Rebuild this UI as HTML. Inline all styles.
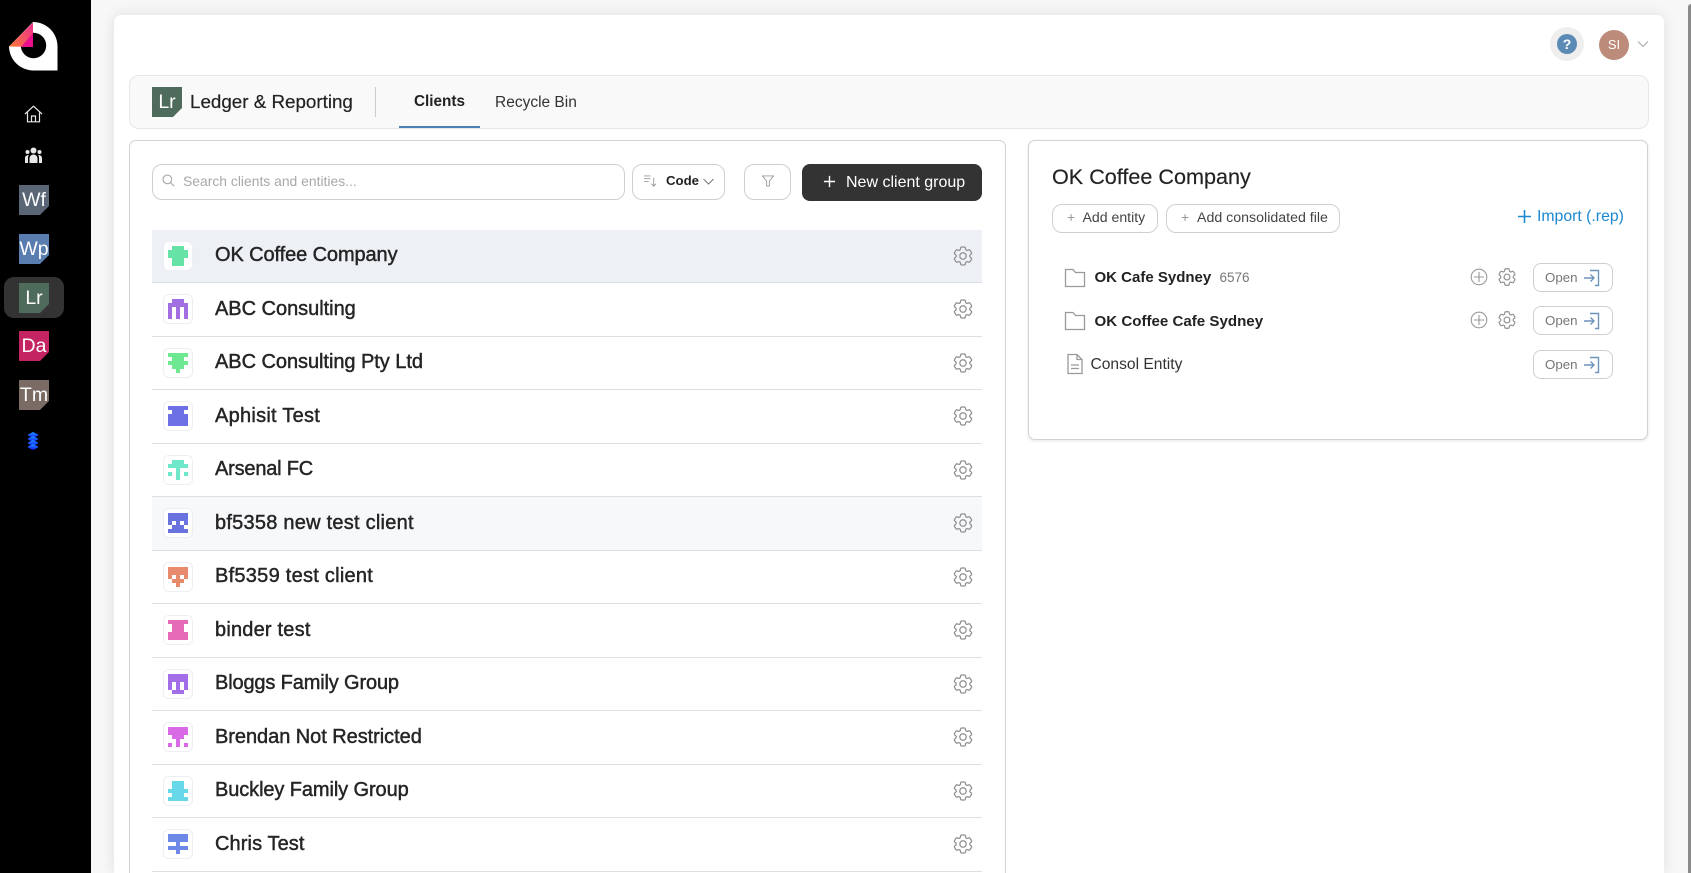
<!DOCTYPE html>
<html lang="en"><head><meta charset="utf-8"><title>Ledger &amp; Reporting</title>
<style>
*{box-sizing:border-box}
html,body{margin:0;width:1691px;height:873px;overflow:hidden;background:#f7f7f7;font-family:"Liberation Sans",Arial,sans-serif;color:#222}
#root{position:relative;width:1691px;height:873px;overflow:hidden;background:#f7f7f7}
.a{position:absolute}
.t{position:absolute;white-space:nowrap;line-height:20px}
#side{position:absolute;left:0;top:0;width:91px;height:873px;background:#000}
.tile{position:absolute;width:30px;height:30px;color:#fff;display:flex;align-items:center;justify-content:center;font-size:19.500px;clip-path:polygon(0 0,100% 0,100% 70%,70% 100%,0 100%)}
#card{position:absolute;left:114px;top:15px;width:1550px;height:858px;background:#fff;border-radius:7px 7px 0 0;box-shadow:0 0 14px rgba(0,0,0,.1)}
.btn{position:absolute;background:#fff;border:1px solid #cfcfcf;border-radius:10px}
.row{position:absolute;left:152px;width:830px;border-bottom:1px solid #dcdfe3}
.row .ic{position:absolute;left:11px;top:11px;width:30px;height:30px;background:#fff;border:1px solid #eceef1;border-radius:6px}
.row .ic svg{position:absolute;left:4px;top:4px;width:20px;height:20px;shape-rendering:crispEdges}
.row .n{position:absolute;left:63px;top:14px;line-height:24px;font-size:20px;letter-spacing:-.1px;white-space:nowrap;color:#252525;-webkit-text-stroke:.45px #252525}
.row .g{position:absolute;left:799px;top:14px;width:24px;height:24px}
.gear{fill:none;stroke:#8f8f8f;stroke-width:1.25}
.open{position:absolute;left:1533px;width:80px;height:29px;background:#fff;border:1px solid #cfcfcf;border-radius:8px}
.open span{position:absolute;left:11px;top:4px;line-height:20px;font-size:13.300px;color:#777}
.open svg{position:absolute;left:49px;top:5px;width:18px;height:18px;fill:none;stroke:#6f94bb;stroke-width:1.4}
</style></head><body>
<div id="root">
<svg width="0" height="0" style="position:absolute"><defs>
<symbol id="gear" viewBox="0 0 24 24"><path d="M9.594 3.94c.09-.542.56-.94 1.11-.94h2.593c.55 0 1.02.398 1.11.94l.213 1.281c.063.374.313.686.645.87.074.04.147.083.22.127.325.196.72.257 1.075.124l1.217-.456a1.125 1.125 0 0 1 1.37.49l1.296 2.247a1.125 1.125 0 0 1-.26 1.431l-1.003.827c-.293.241-.438.613-.43.992a7.723 7.723 0 0 1 0 .255c-.008.378.137.75.43.991l1.004.827c.424.35.534.955.26 1.43l-1.298 2.247a1.125 1.125 0 0 1-1.369.491l-1.217-.456c-.355-.133-.75-.072-1.076.124a6.47 6.47 0 0 1-.22.128c-.331.183-.581.495-.644.869l-.213 1.281c-.09.543-.56.94-1.11.94h-2.594c-.55 0-1.019-.398-1.11-.94l-.213-1.281c-.062-.374-.312-.686-.644-.87a6.52 6.52 0 0 1-.22-.127c-.325-.196-.72-.257-1.076-.124l-1.217.456a1.125 1.125 0 0 1-1.369-.49l-1.297-2.247a1.125 1.125 0 0 1 .26-1.431l1.004-.827c.292-.24.437-.613.43-.991a6.932 6.932 0 0 1 0-.255c.007-.38-.138-.751-.43-.992l-1.004-.827a1.125 1.125 0 0 1-.26-1.43l1.297-2.247a1.125 1.125 0 0 1 1.37-.491l1.216.456c.356.133.751.072 1.076-.124.072-.044.146-.086.22-.128.332-.183.582-.495.644-.869l.214-1.28Z"/><circle cx="12" cy="12" r="3.2"/></symbol>
<symbol id="enter" viewBox="0 0 18 18"><path d="M1 9h10M7.500 5.500 11 9l-3.500 3.500M7 1.500h8.500v15H12"/></symbol>
<linearGradient id="lg" x1="0" y1="1" x2="1" y2="0"><stop offset="0" stop-color="#f97b35"/><stop offset="1" stop-color="#ee2a8e"/></linearGradient>
<linearGradient id="st" x1="0" y1="0" x2="0" y2="1"><stop offset="0" stop-color="#1a9cff"/><stop offset="1" stop-color="#1a10ff"/></linearGradient>
</defs></svg>

<div id="side">
<svg class="a" style="left:0;top:0" width="91" height="91" viewBox="0 0 91 91">
<path d="M33 22A24.500 24.500 0 0 1 57.500 46.500V70.500H33.500A24.500 24.500 0 0 1 9 46.500Z" fill="#fff"/>
<circle cx="33.500" cy="45.500" r="12.700" fill="#000"/>
<path d="M9 46.500 33 22.500V47Z" fill="url(#lg)"/>
<path d="M21 47 33 33V47Z" fill="#ea0f8c"/>
</svg>
<svg class="a" style="left:24px;top:105px" width="19" height="18" viewBox="0 0 19 18" fill="none" stroke="#e8e8e8" stroke-width="1.2"><path d="M1 9 9.500 1.200 18 9M3.500 7.500V16.800H15.500V7.500M7.500 16.800V11H11.500V16.800"/></svg>
<svg class="a" style="left:24px;top:147px" width="19" height="16" viewBox="0 0 19 16" fill="#e8e8e8"><circle cx="9.500" cy="3.500" r="3"/><circle cx="3.500" cy="5" r="2"/><circle cx="15.500" cy="5" r="2"/><path d="M5.500 16v-4.500a4 4 0 0 1 8 0V16ZM1 16v-4.500C1 9 2.500 8 4.800 8.200 4.200 9 4 10 4 11.500V16ZM18 16v-4.500C18 9 16.500 8 14.200 8.200 14.800 9 15 10 15 11.500V16Z"/></svg>
<div class="a" style="left:4px;top:277px;width:60px;height:41px;background:#333;border-radius:10px"></div>
<div class="tile" style="left:19px;top:185px;background:#5a6675">Wf</div>
<div class="tile" style="left:19px;top:234px;background:#5a7db0">Wp</div>
<div class="tile" style="left:19px;top:283px;background:#4f6b5c">Lr</div>
<div class="tile" style="left:19px;top:331px;background:#c42462">Da</div>
<div class="tile" style="left:19px;top:380px;background:#7a6b64">Tm</div>
<svg class="a" style="left:27px;top:431px" width="12" height="19" viewBox="0 0 12 19" fill="url(#st)"><path d="M6 1l5 2.500v1L6 7 1 4.500v-1Z"/><path d="M6 5l5 2.500v1L6 11 1 8.500v-1Z"/><path d="M6 9l5 2.500v1L6 15 1 12.500v-1Z"/><path d="M6 13l5 2.500v1L6 19 1 16.500v-1Z"/></svg>
</div>

<div id="card"></div>

<!-- top right -->
<div class="a" style="left:1550px;top:27px;width:34px;height:34px;border-radius:50%;background:#eee"></div>
<div class="a" style="left:1557px;top:34px;width:20px;height:20px;border-radius:50%;background:#5b8bb5;color:#fff;font-weight:700;font-size:14px;line-height:20px;text-align:center">?</div>
<div class="a" style="left:1599px;top:30px;width:30px;height:30px;border-radius:50%;background:#bc8b7a;color:#fff;font-size:13px;line-height:30px;text-align:center">SI</div>
<svg class="a" style="left:1637px;top:40px" width="12" height="8" viewBox="0 0 12 8" fill="none" stroke="#aaa" stroke-width="1.1"><path d="M1 1.500 6 6.500 11 1.500"/></svg>

<!-- header bar -->
<div class="a" style="left:129px;top:75px;width:1520px;height:54px;background:#f9f9f9;border:1px solid #e6e6e6;border-radius:10px"></div>
<div class="tile" style="left:152px;top:87px;background:#4f6b5c">Lr</div>
<span class="t" style="left:190px;top:91.500px;font-size:18.800px;-webkit-text-stroke:.2px #222">Ledger &amp; Reporting</span>
<div class="a" style="left:375px;top:87px;width:1px;height:30px;background:#ccc"></div>
<span class="t" style="left:414px;top:92px;font-size:15.300px;font-weight:700">Clients</span>
<div class="a" style="left:399px;top:126px;width:81px;height:2px;background:#4f7fb5"></div>
<span class="t" style="left:495px;top:92.500px;font-size:15.500px;color:#333">Recycle Bin</span>

<!-- left panel -->
<div class="a" style="left:129px;top:140px;width:877px;height:733px;background:#fff;border:1px solid #d2d2d2;border-bottom:0;border-radius:7px 7px 0 0"></div>
<div class="btn" style="left:152px;top:164px;width:473px;height:36px"></div>
<svg class="a" style="left:162px;top:174px" width="13" height="13" viewBox="0 0 15 15" fill="none" stroke="#aaa" stroke-width="1.300"><circle cx="6.200" cy="6.200" r="5"/><path d="M10 10l4 4"/></svg>
<span class="t" style="left:183px;top:171px;font-size:13.900px;color:#a8a8a8">Search clients and entities...</span>
<div class="btn" style="left:632px;top:164px;width:93px;height:36px"></div>
<svg class="a" style="left:644px;top:175px" width="13" height="12" viewBox="0 0 14 13" fill="none" stroke="#999" stroke-width="1"><path d="M0 1h7M0 4h7M0 7h5M10.500 3v9M8 9.500l2.500 2.500 2.500-2.500"/></svg>
<span class="t" style="left:666px;top:171.400px;font-size:13.200px;font-weight:700">Code</span>
<svg class="a" style="left:703px;top:178px" width="11" height="7" viewBox="0 0 11 7" fill="none" stroke="#777" stroke-width="1"><path d="M.5 1 5.500 6 10.500 1"/></svg>
<div class="btn" style="left:744px;top:164px;width:47px;height:36px"></div>
<svg class="a" style="left:762px;top:175px" width="12" height="12" viewBox="0 0 13 13" fill="none" stroke="#999" stroke-width="1"><path d="M.5 1h12L8 6.500V12H5V6.500Z"/></svg>
<div class="a" style="left:802px;top:164px;width:180px;height:37px;background:#333;border-radius:8px"></div>
<svg class="a" style="left:823px;top:175px" width="13" height="13" viewBox="0 0 14 14" stroke="#fff" stroke-width="1.500"><path d="M7 1v12M1 7h12"/></svg>
<span class="t" style="left:846px;top:173px;font-size:16px;color:#fff">New client group</span>

<div class="row" style="top:230px;height:53px;background:#edf1f5"><div class="ic"><svg viewBox="0 0 5 5"><path fill="#66e2a6" d="M1 0h3v1H1zM0 1h5v2H0zM1 3h3v2H1z"/></svg></div><div class="n" style="top:13px">OK Coffee Company</div><svg class="g gear"><use href="#gear"/></svg></div>
<div class="row" style="top:283px;height:54px"><div class="ic"><svg viewBox="0 0 5 5"><path fill="#a26fe2" d="M1 0h3v1H1zM0 1h5v1H0zM0 2h1v3H0zM2 2h1v3H2zM4 2h1v3H4z"/></svg></div><div class="n" style="letter-spacing:-.03px">ABC Consulting</div><svg class="g gear"><use href="#gear"/></svg></div>
<div class="row" style="top:337px;height:53px"><div class="ic"><svg viewBox="0 0 5 5"><path fill="#6ee890" d="M0 0h5v1H0zM1 1h3v1H1zM0 2h5v1H0zM1 3h3v1H1zM2 4h1v1H2z"/></svg></div><div class="n" style="top:13px;letter-spacing:-.05px">ABC Consulting Pty Ltd</div><svg class="g gear"><use href="#gear"/></svg></div>
<div class="row" style="top:390px;height:54px"><div class="ic"><svg viewBox="0 0 5 5"><path fill="#6c70e4" d="M0 0h5v1H0zM1 1h3v1H1zM0 2h5v3H0z"/></svg></div><div class="n" style="letter-spacing:.26px">Aphisit Test</div><svg class="g gear"><use href="#gear"/></svg></div>
<div class="row" style="top:444px;height:53px"><div class="ic"><svg viewBox="0 0 5 5"><path fill="#6ee8c8" d="M1 0h3v1H1zM0 1h5v1H0zM2 2h1v3H2zM0 3h1v1H0zM4 3h1v1H4z"/></svg></div><div class="n" style="top:13px;letter-spacing:-.2px">Arsenal FC</div><svg class="g gear"><use href="#gear"/></svg></div>
<div class="row" style="top:497px;height:54px;background:#f7f8fa"><div class="ic"><svg viewBox="0 0 5 5"><path fill="#6a72e0" d="M0 0h5v2H0zM0 2h1v1H0zM2 2h1v1H2zM4 2h1v1H4zM1 3h3v1H1zM0 4h5v1H0z"/></svg></div><div class="n" style="letter-spacing:.24px">bf5358 new test client</div><svg class="g gear"><use href="#gear"/></svg></div>
<div class="row" style="top:551px;height:53px"><div class="ic"><svg viewBox="0 0 5 5"><path fill="#e88a6c" d="M0 0h5v2H0zM0 2h1v1H0zM2 2h1v1H2zM4 2h1v1H4zM1 3h3v1H1zM2 4h1v1H2z"/></svg></div><div class="n" style="top:13px;letter-spacing:.26px">Bf5359 test client</div><svg class="g gear"><use href="#gear"/></svg></div>
<div class="row" style="top:604px;height:54px"><div class="ic"><svg viewBox="0 0 5 5"><path fill="#e66ab8" d="M0 0h5v1H0zM1 1h3v2H1zM0 3h5v2H0z"/></svg></div><div class="n" style="letter-spacing:.2px">binder test</div><svg class="g gear"><use href="#gear"/></svg></div>
<div class="row" style="top:658px;height:53px"><div class="ic"><svg viewBox="0 0 5 5"><path fill="#a26fe8" d="M0 0h5v2H0zM0 2h1v2H0zM2 2h1v2H2zM4 2h1v2H4zM1 4h3v1H1z"/></svg></div><div class="n" style="top:13px;letter-spacing:-.15px">Bloggs Family Group</div><svg class="g gear"><use href="#gear"/></svg></div>
<div class="row" style="top:711px;height:54px"><div class="ic"><svg viewBox="0 0 5 5"><path fill="#d96ae6" d="M0 0h5v2H0zM1 2h3v1H1zM2 3h1v1H2zM0 4h1v1H0zM2 4h1v1H2zM4 4h1v1H4z"/></svg></div><div class="n" style="letter-spacing:-.05px">Brendan Not Restricted</div><svg class="g gear"><use href="#gear"/></svg></div>
<div class="row" style="top:765px;height:53px"><div class="ic"><svg viewBox="0 0 5 5"><path fill="#66d8e8" d="M1 0h3v2H1zM0 2h5v1H0zM1 3h3v1H1zM0 4h5v1H0z"/></svg></div><div class="n" style="top:13px">Buckley Family Group</div><svg class="g gear"><use href="#gear"/></svg></div>
<div class="row" style="top:818px;height:54px"><div class="ic"><svg viewBox="0 0 5 5"><path fill="#6e88e8" d="M0 0h5v2H0zM2 2h1v1H2zM0 3h5v1H0zM2 4h1v1H2z"/></svg></div><div class="n" style="letter-spacing:.1px">Chris Test</div><svg class="g gear"><use href="#gear"/></svg></div>

<!-- right panel -->
<div class="a" style="left:1028px;top:140px;width:620px;height:300px;background:#fff;border:1px solid #d2d2d2;border-radius:7px;box-shadow:0 1px 3px rgba(0,0,0,.1)"></div>
<span class="t" style="left:1052px;top:167px;font-size:21.600px;-webkit-text-stroke:.15px #222">OK Coffee Company</span>
<div class="btn" style="left:1052px;top:204px;width:106px;height:29px"></div>
<span class="t" style="left:1067px;top:207px;font-size:14px;color:#999">+</span>
<span class="t" style="left:1082.500px;top:207px;font-size:14.100px;color:#444">Add entity</span>
<div class="btn" style="left:1166px;top:204px;width:174px;height:29px"></div>
<span class="t" style="left:1181px;top:207px;font-size:14px;color:#999">+</span>
<span class="t" style="left:1197px;top:208px;font-size:14.200px;color:#444">Add consolidated file</span>
<svg class="a" style="left:1518px;top:210px" width="13" height="13" viewBox="0 0 13 13" stroke="#1a88d0" stroke-width="1.600"><path d="M6.500 0v13M0 6.500h13"/></svg>
<span class="t" style="left:1537px;top:207px;font-size:15.800px;color:#1a88d0">Import (.rep)</span>

<svg class="a" style="left:1064px;top:268px" width="22" height="20" viewBox="0 0 22 20" fill="none" stroke="#999" stroke-width="1.300"><path d="M1.500 18.500V1.500H9L11.500 4.500H20.500V18.500Z"/></svg>
<span class="t" style="left:1094.500px;top:268px;font-size:15px;font-weight:700">OK Cafe Sydney</span>
<span class="t" style="left:1219.500px;top:268px;font-size:13.500px;color:#777">6576</span>
<svg class="a" style="left:1064px;top:311px" width="22" height="20" viewBox="0 0 22 20" fill="none" stroke="#999" stroke-width="1.300"><path d="M1.500 18.500V1.500H9L11.500 4.500H20.500V18.500Z"/></svg>
<span class="t" style="left:1094.500px;top:311.500px;font-size:15.100px;font-weight:700">OK Coffee Cafe Sydney</span>
<svg class="a" style="left:1066px;top:353px" width="18" height="22" viewBox="0 0 18 22" fill="none" stroke="#999" stroke-width="1.300"><path d="M2 1.500H11L16 6.500V20.500H2ZM11 1.500V6.500H16M5 12H13M5 15.500H13"/></svg>
<span class="t" style="left:1090.500px;top:354.500px;font-size:15.600px;color:#333">Consol Entity</span>

<svg class="a" style="left:1470px;top:268px" width="18" height="18" viewBox="0 0 18 18" fill="none" stroke="#999" stroke-width="1.100"><circle cx="9" cy="9" r="7.800"/><path d="M9 4v10M4 9h10"/></svg>
<svg class="a gear" style="left:1496px;top:266px" width="22" height="22"><use href="#gear"/></svg>
<svg class="a" style="left:1470px;top:311px" width="18" height="18" viewBox="0 0 18 18" fill="none" stroke="#999" stroke-width="1.100"><circle cx="9" cy="9" r="7.800"/><path d="M9 4v10M4 9h10"/></svg>
<svg class="a gear" style="left:1496px;top:309px" width="22" height="22"><use href="#gear"/></svg>

<div class="open" style="top:263px"><span>Open</span><svg><use href="#enter"/></svg></div>
<div class="open" style="top:306px"><span>Open</span><svg><use href="#enter"/></svg></div>
<div class="open" style="top:350px"><span>Open</span><svg><use href="#enter"/></svg></div>

<div class="a" style="left:1688px;top:4px;width:3px;height:869px;background:#8a8a8a;border-radius:3px 0 0 0"></div>
</div>
</body></html>
